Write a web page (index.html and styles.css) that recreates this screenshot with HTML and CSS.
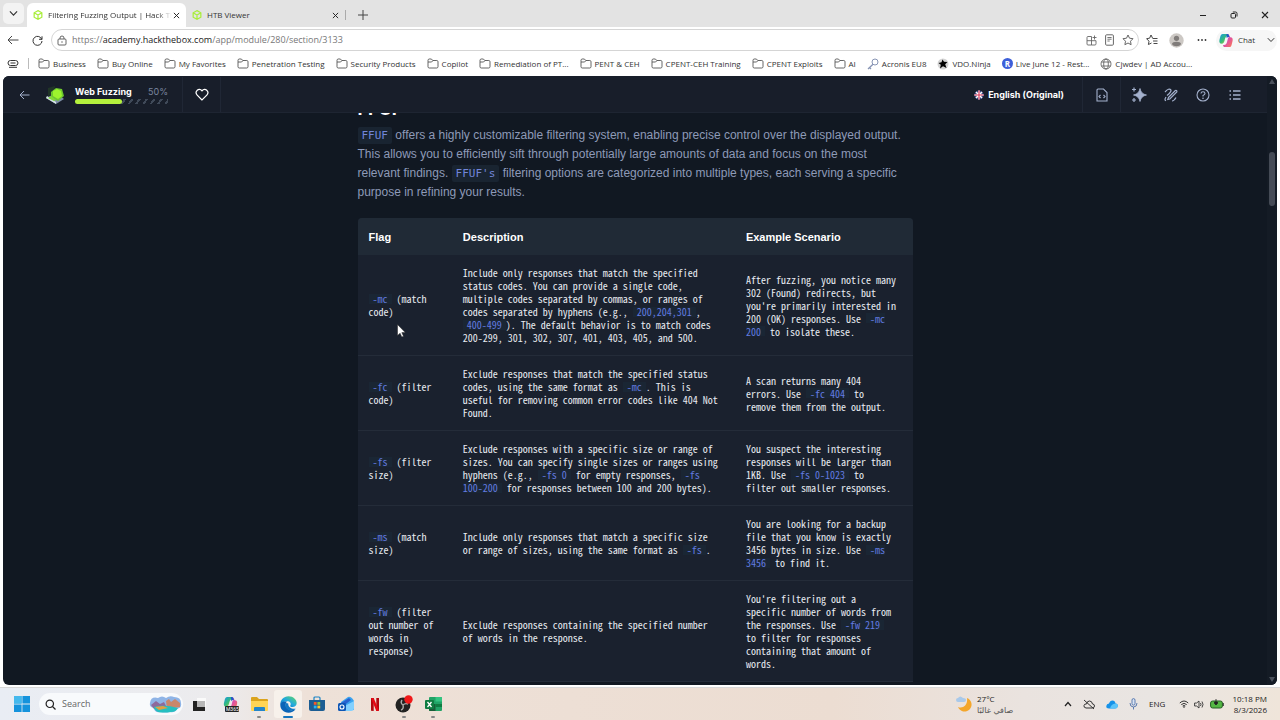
FILE: index.html
```html
<!DOCTYPE html>
<html lang="en">
<head>
<meta charset="utf-8">
<title>Filtering Fuzzing Output | Hack The Box Academy</title>
<link rel="stylesheet" href="styles.css">
</head>
<body>
<svg class="defs" aria-hidden="true">
  <defs>
    <symbol id="folder" viewBox="0 0 12 11"><path d="M1 3.2V2.3C1 1.6 1.5 1 2.2 1h2.2l1.4 1.5h4C10.500 2.500 11 3 11 3.700v5C11 9.500 10.500 10 9.800 10H2.200C1.500 10 1 9.500 1 8.800zM1 4h3.600L6 2.500" fill="none" stroke="#555" stroke-width=".9"/></symbol>
    <symbol id="close" viewBox="0 0 8 8"><path d="M1 1l6 6M7 1L1 7" stroke="#222" stroke-width="1.100"/></symbol>
    <symbol id="down" viewBox="0 0 8 6"><path d="M.8 1.200L4 4.500l3.200-3.300" fill="none" stroke="#333" stroke-width="1"/></symbol>
    <symbol id="cube" viewBox="0 0 12 12"><path d="M6 .8l4.600 2.500v5.400L6 11.200 1.400 8.700V3.300zM1.400 3.300L6 6l4.600-2.700M6 6v5" fill="none" stroke="#a9ee3c" stroke-width="1.500"/></symbol>
    <linearGradient id="copA" x1="0" y1="0" x2="1" y2="1"><stop offset="0" stop-color="#1797e8"/><stop offset=".5" stop-color="#35bd78"/><stop offset="1" stop-color="#f3c52f"/></linearGradient>
    <linearGradient id="copB" x1="0" y1="0" x2="1" y2="1"><stop offset="0" stop-color="#8a4bea"/><stop offset=".5" stop-color="#dc4fa6"/><stop offset="1" stop-color="#ff7c4c"/></linearGradient>
    <symbol id="copilot" viewBox="0 0 16 16"><path d="M4.500 1H9c1.500 0 2 1 2.300 2L9 3.500C7.500 4 7 6 6.500 8S5.200 11.500 3.500 11.500C1 11.500.6 9.500 1 7.500l1-4C2.400 2 3 1 4.500 1z" fill="url(#copA)"/><path d="M9.500 1c1.500 0 2 1 2.300 2.500l.7 1c2.400 0 3 1.500 2.500 4l-1 4c-.4 1.500-1 2.500-2.500 2.500H7c-1.500 0-2-1-2.300-2L7 12.500c1.500-.5 2-2.500 2.500-4.500s.5-3 1.500-3.600C10.500 3 10.300 1.500 9.500 1z" fill="url(#copB)"/><path d="M8.500 1h1c1.200.3 1.800 1.500 2.200 3.400-1.500-.2-2.400.2-3 1.100z" fill="#2458c9"/></symbol>
  </defs>
</svg>

<div class="tabs">
  <button class="tab-menu" aria-label="Tab actions"><svg width="9" height="7"><use href="#down"/></svg></button>
  <div class="tab active"><svg width="10" height="10"><use href="#cube"/></svg><span class="tab-title">Filtering Fuzzing Output | Hack Th</span><button aria-label="Close tab"><svg width="7" height="7"><use href="#close"/></svg></button></div>
  <div class="tab"><svg width="10" height="10"><use href="#cube"/></svg><span class="tab-title">HTB Viewer</span><button aria-label="Close tab"><svg width="7" height="7"><use href="#close"/></svg></button></div>
  <button class="new-tab" aria-label="New tab"><svg width="10" height="10" viewBox="0 0 10 10"><path d="M5 0v10M0 5h10" stroke="#444"/></svg></button>
  <div class="window-buttons">
    <button aria-label="Minimize"><svg width="8" height="8" viewBox="0 0 8 8"><path d="M1 4.500h6" stroke="#222"/></svg></button>
    <button aria-label="Restore"><svg width="8" height="8" viewBox="0 0 8 8"><rect x="1" y="2.500" width="4.500" height="4.500" rx="1" fill="none" stroke="#222"/><path d="M2.800 1h2.700Q7 1 7 2.500v3" fill="none" stroke="#222"/></svg></button>
    <button aria-label="Close"><svg width="8" height="8"><use href="#close"/></svg></button>
  </div>
</div>

<div class="toolbar">
  <button class="nav" aria-label="Back"><svg width="12" height="10" viewBox="0 0 12 10"><path d="M11.500 5H1M5 1L1 5l4 4" fill="none" stroke="#444"/></svg></button>
  <button class="nav" aria-label="Refresh"><svg width="11" height="11" viewBox="0 0 11 11"><path d="M9.800 4.500A4.500 4.500 0 1 0 10 6M10 1.300v3H7" fill="none" stroke="#333"/></svg></button>
  <div class="address">
    <svg width="10" height="11" viewBox="0 0 10 11"><rect x="1" y="4" width="8" height="6" rx="1" fill="none" stroke="#555" stroke-width=".9"/><path d="M3 4V3a2 2 0 0 1 4 0v1" fill="none" stroke="#555" stroke-width=".9"/><circle cx="5" cy="7" r=".7" fill="#555"/></svg>
    <div class="url" role="textbox" aria-label="Address" tabindex="0">https://<b>academy.hackthebox.com</b>/app/module/280/section/3133</div>
    <button aria-label="Apps"><svg width="11" height="11" viewBox="0 0 11 11"><path d="M1 2.500Q1 1.500 2 1.500h3.500v8.500H2Q1 10 1 9zM1 5.700h9v3Q10 10 9 10H5.500M8.500.5v4M6.500 2.500h4" fill="none" stroke="#666" stroke-width=".9"/></svg></button>
    <button aria-label="Reader"><svg width="9" height="12" viewBox="0 0 9 12"><rect x=".6" y=".8" width="7.800" height="10.400" rx="1" fill="none" stroke="#666"/><path d="M2.400 3.500h4.200M2.400 5.200h4.200M2.400 7h2.300" stroke="#666" stroke-width=".9"/></svg></button>
    <button aria-label="Add to favorites"><svg width="12" height="12" viewBox="0 0 12 12"><path d="M6 1l1.500 3.200 3.500.5-2.500 2.500.6 3.500L6 9l-3.100 1.700.6-3.500L1 4.700l3.500-.5z" fill="none" stroke="#555" stroke-width=".9"/></svg></button>
  </div>
  <button class="tool" aria-label="Favorites"><svg width="12" height="12" viewBox="0 0 12 12"><path d="M6.500 4L5 1 3.600 4.200l-3 .5L3 7.200l-.6 3.300L5.500 9M6.500 4.500h5M7 7h4.500M7.500 9.500h4" fill="none" stroke="#333" stroke-width=".9"/></svg></button>
  <button class="tool" aria-label="Profile"><svg width="15" height="15" viewBox="0 0 15 15"><circle cx="7.500" cy="7.500" r="7.200" fill="#ccc8c4"/><circle cx="7.500" cy="5.300" r="2.600" fill="#807c7a"/><path d="M3 11c0-3 9-3 9 0-1.300 3-7.700 3-9 0z" fill="#807c7a"/></svg></button>
  <button class="tool" aria-label="More"><svg width="10" height="4" viewBox="0 0 10 4"><g fill="#333"><circle cx="1.500" cy="2" r=".9"/><circle cx="5" cy="2" r=".9"/><circle cx="8.500" cy="2" r=".9"/></g></svg></button>
  <button class="chat"><svg width="16" height="15"><use href="#copilot"/></svg><span>Chat</span><svg width="8" height="6"><use href="#down"/></svg></button>
</div>

<nav class="bookmarks" aria-label="Favorites bar">
  <button aria-label="Workspace"><svg width="12" height="10" viewBox="0 0 12 10"><rect x="1" y="1.500" width="10" height="5" rx="2.500" fill="none" stroke="#333"/><path d="M3.500 4h5M2 8.300h8" stroke="#333"/></svg></button>
  <i class="bar"></i>
  <a href="#"><svg width="12" height="11"><use href="#folder"/></svg>Business</a>
  <a href="#"><svg width="12" height="11"><use href="#folder"/></svg>Buy Online</a>
  <a href="#"><svg width="12" height="11"><use href="#folder"/></svg>My Favorites</a>
  <a href="#"><svg width="12" height="11"><use href="#folder"/></svg>Penetration Testing</a>
  <a href="#"><svg width="12" height="11"><use href="#folder"/></svg>Security Products</a>
  <a href="#"><svg width="12" height="11"><use href="#folder"/></svg>Copilot</a>
  <a href="#"><svg width="12" height="11"><use href="#folder"/></svg>Remediation of PT...</a>
  <a href="#"><svg width="12" height="11"><use href="#folder"/></svg>PENT &amp; CEH</a>
  <a href="#"><svg width="12" height="11"><use href="#folder"/></svg>CPENT-CEH Training</a>
  <a href="#"><svg width="12" height="11"><use href="#folder"/></svg>CPENT Exploits</a>
  <a href="#"><svg width="12" height="11"><use href="#folder"/></svg>AI</a>
  <a href="#"><svg width="12" height="12" viewBox="0 0 12 12"><circle cx="8" cy="4" r="3" fill="#fff" stroke="#8794b4"/><path d="M6 6.200L1 11M2.500 9.500L4 11" stroke="#8794b4" stroke-width="1.300"/></svg>Acronis EU8</a>
  <a href="#"><svg width="12" height="12" viewBox="0 0 12 12"><circle cx="6" cy="6" r="5.500" fill="#d4d4d4"/><path d="M5.500 1.500l1.500 2.300 3.500.2-2.300 2.300L9.500 10 6 8.300 3 10.500l.8-3.800L1.500 5l3-.7z" fill="#000"/></svg>VDO.Ninja</a>
  <a href="#"><span class="r-badge">R</span>Live June 12 - Rest...</a>
  <a href="#"><svg width="12" height="12" viewBox="0 0 12 12"><g fill="none" stroke="#555" stroke-width=".8"><circle cx="6" cy="6" r="5"/><ellipse cx="6" cy="6" rx="2.300" ry="5"/><path d="M1.500 4h9M1.500 8h9"/></g></svg>Cjwdev | AD Accou...</a>
</nav>

<div class="page">
  <div class="view">
    <header class="module-bar">
      <button class="back" aria-label="Back"><svg width="11" height="10" viewBox="0 0 11 10"><path d="M10.500 5H1M5 1L1 5l4 4" fill="none" stroke="#a4b1cd"/></svg></button>
      <svg class="logo" width="20" height="20" viewBox="0 0 20 20"><path d="M1 13l10 6 8-5-8-6z" fill="#7e8fa6"/><path d="M1 13l10 6v-2L2 11z" fill="#d5e3e4"/><path d="M3 3l7-2-1 8-6 2z" fill="#203527"/><path d="M6 7l5-4 6 1 2 7-6 5-7-4z" fill="#6ec92e"/><path d="M8 6l4-2 4 2 1 5-4 3-5-3z" fill="#9df42d"/><path d="M3 13l3-2 5 4-2 1z" fill="#82da36"/></svg>
      <div class="progress">
        <div class="progress-head"><strong>Web Fuzzing</strong><span>50%</span></div>
        <div class="track"><div class="fill" style="width:50%"></div></div>
      </div>
      <button class="heart" aria-label="Like"><svg width="14" height="13" viewBox="0 0 14 13"><path d="M7 12L2.200 7.200C-1 3.500 4-1 7 2.800 10-1 15 3.500 11.800 7.200z" fill="none" stroke="#fff" stroke-width="1.200"/></svg></button>
      <button class="language"><svg width="10" height="10" viewBox="0 0 10 10"><circle cx="5" cy="5" r="4.600" fill="#33457f"/><path d="M2 2l6 6M8 2L2 8M5 .4v9.200M.4 5h9.200" stroke="#fff" stroke-width="1.600"/><path d="M5 .4v9.200M.4 5h9.200" stroke="#dc3555" stroke-width="1.100"/></svg>English (Original)</button>
      <button class="notes" aria-label="Code"><svg width="12" height="14" viewBox="0 0 12 14"><path d="M2 1h5.500L11 4.500V13H1V2q0-1 1-1zM4.500 7L3 8.500 4.500 10M7.500 7L9 8.500 7.500 10" fill="none" stroke="#a4b1cd" stroke-width="1.100"/></svg></button>
      <div class="actions">
        <button aria-label="Assistant"><svg width="16" height="16" viewBox="0 0 16 16"><path d="M9 1.500Q10 7 15.500 8 10 9 9 14.500 8 9 2.500 8 8 7 9 1.500z" fill="#a4b1cd" stroke="#a4b1cd" stroke-width=".8" stroke-linejoin="round"/><path d="M3 .5v4M1 2.500h4M3 11v4M1 13h4" stroke="#a4b1cd" stroke-width="1.200"/></svg></button>
        <button aria-label="Draw"><svg width="14" height="14" viewBox="0 0 14 14"><path d="M1 4Q5-.5 7 2.200 7.500 4 3 7.500M4.500 9.500l6.800-7q2-.5 1.500 1.500l-7 7-2 .5zM8 13q2 0 4-3.500M2 9q-2 3 0 3.700" fill="none" stroke="#a4b1cd" stroke-width="1.200"/></svg></button>
        <button aria-label="Help"><svg width="14" height="14" viewBox="0 0 14 14"><circle cx="7" cy="7" r="6" fill="none" stroke="#a4b1cd" stroke-width="1.100"/><path d="M5 5.500Q5 3.700 7 3.700T9 5.500Q9 6.500 7 7.500v1" fill="none" stroke="#a4b1cd" stroke-width="1.100"/><circle cx="7" cy="10.300" r=".8" fill="#a4b1cd"/></svg></button>
        <button aria-label="Contents"><svg width="12" height="12" viewBox="0 0 12 12"><path d="M.5 2h1.500M.5 6H2M.5 10H2M4 2h7.500M4 6h7.500M4 10h7.500" stroke="#a4b1cd" stroke-width="1.300"/></svg></button>
      </div>
    </header>
    <main class="scroll">
      <article>
        <h2>FFUF</h2>
        <p><code>FFUF</code> offers a highly customizable filtering system, enabling precise control over the displayed output.<br>This allows you to efficiently sift through potentially large amounts of data and focus on the most<br>relevant findings. <code>FFUF's</code> filtering options are categorized into multiple types, each serving a specific<br>purpose in refining your results.</p>
        <table>
          <thead><tr><th class="flag">Flag</th><th class="desc">Description</th><th>Example Scenario</th></tr></thead>
          <tbody>
            <tr>
              <td><code>-mc</code> (match<br>code)</td>
              <td>Include only responses that match the specified<br>status codes. You can provide a single code,<br>multiple codes separated by commas, or ranges of<br>codes separated by hyphens (e.g., <code>200,204,301</code>,<br><code>400-499</code>). The default behavior is to match codes<br>200-299, 301, 302, 307, 401, 403, 405, and 500.</td>
              <td>After fuzzing, you notice many<br>302 (Found) redirects, but<br>you're primarily interested in<br>200 (OK) responses. Use <code>-mc<br>200</code> to isolate these.</td>
            </tr>
            <tr>
              <td><code>-fc</code> (filter<br>code)</td>
              <td>Exclude responses that match the specified status<br>codes, using the same format as <code>-mc</code>. This is<br>useful for removing common error codes like 404 Not<br>Found.</td>
              <td>A scan returns many 404<br>errors. Use <code>-fc 404</code> to<br>remove them from the output.</td>
            </tr>
            <tr>
              <td><code>-fs</code> (filter<br>size)</td>
              <td>Exclude responses with a specific size or range of<br>sizes. You can specify single sizes or ranges using<br>hyphens (e.g., <code>-fs 0</code> for empty responses, <code>-fs<br>100-200</code> for responses between 100 and 200 bytes).</td>
              <td>You suspect the interesting<br>responses will be larger than<br>1KB. Use <code>-fs 0-1023</code> to<br>filter out smaller responses.</td>
            </tr>
            <tr>
              <td><code>-ms</code> (match<br>size)</td>
              <td>Include only responses that match a specific size<br>or range of sizes, using the same format as <code>-fs</code>.</td>
              <td>You are looking for a backup<br>file that you know is exactly<br>3456 bytes in size. Use <code>-ms<br>3456</code> to find it.</td>
            </tr>
            <tr>
              <td><code>-fw</code> (filter<br>out number of<br>words in<br>response)</td>
              <td>Exclude responses containing the specified number<br>of words in the response.</td>
              <td>You're filtering out a<br>specific number of words from<br>the responses. Use <code>-fw 219</code><br>to filter for responses<br>containing that amount of<br>words.</td>
            </tr>
          </tbody>
        </table>
      </article>
    </main>
  </div>
  <div class="scrollbar"><svg width="6" height="5" viewBox="0 0 6 5"><path d="M3 0l3 5H0z" fill="#4a515c"/></svg><div class="thumb"></div><svg width="6" height="5" viewBox="0 0 6 5"><path d="M3 5l3-5H0z" fill="#4a515c"/></svg></div>
  <svg class="cursor" width="9" height="14" viewBox="0 0 9 14"><path d="M.5.500v11l2.600-2.300L4.800 13l1.700-.8L4.800 8.600h3.500z" fill="#fff" stroke="#222" stroke-width=".5"/></svg>
</div>

<footer class="taskbar">
  <button class="start" aria-label="Start"><svg width="16" height="16" viewBox="0 0 16 16"><path d="M0 0h7.600v7.600H0zM8.400 0H16v7.600H8.400zM0 8.400h7.600V16H0zM8.400 8.400H16V16H8.400z" fill="#1593dc"/><path d="M0 0h7.600v7.600H0z" fill="#45b9ed"/></svg></button>
  <label class="search"><svg width="11" height="11" viewBox="0 0 11 11"><circle cx="4.800" cy="4.800" r="3.700" fill="none" stroke="#222" stroke-width="1.200"/><path d="M7.500 7.500l3 3" stroke="#222" stroke-width="1.300"/></svg><input type="text" placeholder="Search" aria-label="Search">
    <svg width="33" height="17" viewBox="0 0 33 17"><path d="M1 7Q2 0 9 2q4-3 8 0 4-3 8-1 7 0 7 6 1 5-4 6-2 4-7 3-6 1-9 0-7 1-7-4Q0 11 1 7z" fill="#8fb4e6"/><path d="M2 9l5-4 4 3 4-2 2 4v3H5z" fill="#8e6a9c"/><path d="M17 5l3-2 2 3 4-3 5 4v4l-13 2z" fill="#c9876b"/><path d="M5 11q10-3 24 1-2 4-7 4-8 1-13 0-4-2-4-5z" fill="#25bfc0"/><path d="M6 11l8-1 5 2-9 2z" fill="#e0a044"/></svg></label>
  <button class="task-view" aria-label="Task view"><svg width="15" height="15" viewBox="0 0 15 15"><path d="M5 1h9v9H5z" fill="#fafafa"/><path d="M1 4h4v6h8v4H1z" fill="#222"/><path d="M5 4h8v6H5z" fill="#b7b7b7"/></svg></button>
  <div class="apps">
    <button aria-label="Microsoft 365"><svg width="17" height="16" viewBox="0 0 17 16"><use href="#copilot" width="17" height="15"/><rect x="3" y="10" width="14" height="6" rx="1" fill="#222"/><text x="4" y="15" font-size="5" fill="#fff" font-family="Roboto">M365</text></svg></button>
    <button class="open" aria-label="File Explorer"><svg width="17" height="16" viewBox="0 0 17 16"><path d="M0 2q0-1 1-1h5l2 2h8q1 0 1 1v10H0z" fill="#dba31c"/><path d="M0 5h17v9q0 1-1 1H1q-1 0-1-1z" fill="#ffd455"/><path d="M4 11h9q1 0 1 1v3H3v-3q0-1 1-1z" fill="#2385ca"/></svg></button>
    <button class="open current" aria-label="Microsoft Edge"><svg width="17" height="17" viewBox="0 0 17 17"><defs><linearGradient id="edge" x1="0" y1="1" x2="1" y2="0"><stop offset="0" stop-color="#0961b8"/><stop offset=".5" stop-color="#22a9df"/><stop offset="1" stop-color="#62da61"/></linearGradient></defs><path d="M8.500.3c5 0 8.200 3.400 8.200 6.800 0 2.600-2 3.900-4.200 3.900-2 0-2.700-.7-2.200-1.500C11.700 7 9.600 5 7 5.200 3 5.500 1.800 8 .3 9 .2 4 3.500.3 8.500.3z" fill="url(#edge)"/><path d="M.3 9C1 6 4 5 7 5.700 4.500 7.500 5.500 13 10 14c2 .5 4 0 5.500-1-1.500 2.500-4 3.700-7 3.700C3.500 16.700.3 13 .3 9z" fill="#0b64b7"/><path d="M5.800 7c-1.500 3 .3 6.200 3.400 7.200 2.200.7 4.600.1 6.500-1.500-4 .8-8-2-7.400-5.200z" fill="#1277c4"/></svg></button>
    <button aria-label="Store"><svg width="16" height="16" viewBox="0 0 16 16"><path d="M5 4V2q0-1 1-1h4q1 0 1 1v2" fill="none" stroke="#1b84c6" stroke-width="1.200"/><path d="M0 4h16v9q0 2-2 2H2q-2 0-2-2z" fill="#1c5d93"/><path d="M4.800 6h2.800v2.800H4.800z" fill="#f45a2a"/><path d="M8.400 6h2.800v2.800H8.400z" fill="#8cc63f"/><path d="M4.800 9.600h2.800v2.800H4.800z" fill="#29b6ef"/><path d="M8.400 9.600h2.800v2.800H8.400z" fill="#ffc62d"/></svg></button>
    <button aria-label="Outlook"><svg width="17" height="16" viewBox="0 0 17 16"><path d="M3 6l7-5q3-1 6 4v9H4z" fill="#3ba4ef"/><path d="M3 7l8-5 2 2-9 7z" fill="#2862d0"/><path d="M5 11l11-6v7q0 3-3 3H6z" fill="#82d0ff"/><rect y="7" width="8" height="8" rx="1.500" fill="#0d55b5"/><circle cx="4" cy="11" r="2" fill="none" stroke="#fff" stroke-width="1.100"/></svg></button>
    <button aria-label="Netflix"><svg width="8" height="13" viewBox="0 0 8 13"><path d="M0 0h2.700v13L0 12.700zM5.300 0H8v12.700L5.300 13z" fill="#b20710"/><path d="M0 0h2.700L8 12.700 5.300 13z" fill="#e50914"/></svg></button>
    <button class="open" aria-label="OBS Studio"><svg width="18" height="18" viewBox="0 0 18 18"><circle cx="8" cy="10" r="7.500" fill="#222"/><g fill="none" stroke="#aaa" stroke-width="1.400"><path d="M7 5q-2 3 1 5M13 9q-3-1-5 1M6 15q3-1 2-5"/></g><circle cx="13.500" cy="4.500" r="4.200" fill="#f01819"/></svg></button>
    <button class="open" aria-label="Excel"><svg width="17" height="16" viewBox="0 0 17 16"><rect x="4" y="1" width="13" height="14" rx="1" fill="#21a366"/><path d="M10.500 1H16q1 0 1 1v3.500h-6.500z" fill="#33c481"/><path d="M4 8h6.500v7H5q-1 0-1-1z" fill="#185c37"/><path d="M10.500 8H17v3h-6.500z" fill="#107c41"/><rect y="4" width="9" height="9" rx="1" fill="#107c41"/><path d="M2.500 6l4 5M6.500 6l-4 5" stroke="#fff" stroke-width="1.300"/></svg></button>
  </div>
  <div class="weather"><svg width="16" height="16" viewBox="0 0 16 16"><path d="M11 2a7 7 0 1 1-9 9c5 2 10-2 9-9z" fill="#f4a62a"/><path d="M2 6q-2 0-2-2t2-2q2-3 5 0 3 0 3 2t-2 2z" fill="#a9c9ea"/></svg><div>27°C<br><span lang="ar" dir="rtl">صافي غالبًا</span></div></div>
  <div class="tray">
    <svg width="8" height="6" viewBox="0 0 8 6"><path d="M1 5l3-3.500L7 5" fill="none" stroke="#222" stroke-width="1.200"/></svg>
    <svg width="12" height="11" viewBox="0 0 12 11"><path d="M3 9Q.5 8.500 1 6.500T3.500 5Q4 2 6.500 2T9.500 5q2 0 2 2T9 9zM1 1l10 9" fill="none" stroke="#333"/></svg>
    <svg width="12" height="9" viewBox="0 0 12 9"><path d="M3 8.500Q0 8.500.3 6T3 3.500Q4 .5 6.500.5t3 3q2.500 0 2.300 2.500T9 8.500z" fill="#1692e8"/><path d="M4 8.500Q5 4 9.500 3.500q2.500 0 2.300 2.500T9 8.500z" fill="#5bc4fa"/></svg>
    <svg width="9" height="12" viewBox="0 0 9 12"><rect x="3" y=".6" width="3" height="6.500" rx="1.500" fill="#d8e3f2" stroke="#4e71ac" stroke-width=".9"/><path d="M1 5q0 4 3.500 4T8 5M4.500 9v2.500" fill="none" stroke="#4e71ac" stroke-width=".9"/></svg>
    <span>ENG</span>
  </div>
  <div class="status">
    <svg width="10" height="8" viewBox="0 0 10 8"><path d="M.8 3q4.200-4 8.400 0M2.300 4.600q2.700-2.500 5.400 0M3.700 6q1.300-1 2.600 0" fill="none" stroke="#222" stroke-width=".9"/><circle cx="5" cy="7" r=".8" fill="#222"/></svg>
    <svg width="11" height="9" viewBox="0 0 11 9"><path d="M.6 3h2l2.400-2v7L2.600 6h-2zM6.500 3q1 1.500 0 3M8 1.500q2 3 0 6" fill="none" stroke="#333" stroke-width=".9"/></svg>
    <svg width="14" height="10" viewBox="0 0 14 10"><rect x=".6" y="2" width="11.800" height="7" rx="2" fill="#54b744" stroke="#245f22"/><path d="M13.300 4v3" stroke="#333"/><path d="M6 0v3M4.500 3h3v1.500L6 6 4.500 4.500z" fill="#222" stroke="#222" stroke-width=".8"/></svg>
  </div>
  <div class="clock">10:18 PM<br>8/3/2026</div>
</footer>
</body>
</html>
```
FILE: styles.css
```css
* { box-sizing: border-box; }
body {
  margin: 0;
  height: 100vh;
  display: flex;
  flex-direction: column;
  overflow: hidden;
  background: #fff;
  color: #333;
  font: 8px/12px "Open Sans", "Noto Sans", sans-serif;
}
button {
  padding: 0;
  border: 0;
  background: none;
  color: inherit;
  font: inherit;
  display: flex;
  align-items: center;
  justify-content: center;
}
svg { display: block; flex: none; }
.defs { position: absolute; width: 0; height: 0; }

.tabs { display: flex; align-items: center; height: 27px; flex: none; background: #e3e3e3; padding: 3px 0 0 3px; }
.tab-menu { width: 21px; height: 21px; margin: 0 3px 3px 0; border-radius: 5px; background: #f3f3f3; }
.tab { display: flex; align-items: center; width: 159px; height: 24px; padding: 0 5px 0 6px; }
.tab-title { flex: 1; min-width: 0; margin-left: 5px; overflow: hidden; white-space: nowrap; }
.tab.active { background: #fff; border-radius: 6px 6px 0 0; }
.tab.active .tab-title { mask-image: linear-gradient(to right, #000 88%, transparent); }
.tab button { width: 9px; height: 9px; }
.new-tab { width: 27px; border-left: 1px solid #aaa; padding-left: 8px; }
.window-buttons { margin-left: auto; display: flex; }
.window-buttons button { width: 31px; }

.toolbar { display: flex; align-items: center; height: 26px; flex: none; padding: 0 3px 0 1px; }
.nav { width: 24px; }
.address { flex: 1; display: flex; align-items: center; gap: 8px; height: 22px; margin-left: 2px; padding: 0 4px 0 5px; border: 1px solid #d5d5d5; border-radius: 11px; }
.url { flex: 1; font-size: 9px; margin-left: -3px; color: #777; }
.url b { font-weight: 400; color: #222; }
.tool { width: 25px; }
.chat { width: 61px; height: 21px; margin-left: 2px; border-radius: 11px; background: #f6f6f6; gap: 4px; }
.chat span { flex: none; margin-right: 8px; }

.bookmarks { display: flex; align-items: center; gap: 11px; height: 23px; flex: none; padding: 0 0 2px 7px; white-space: nowrap; }
.bookmarks a { display: flex; align-items: center; gap: 3px; color: #333; text-decoration: none; }
.bar { width: 1px; height: 11px; background: #bbb; margin: 0 -2px; }
.r-badge { width: 11px; height: 11px; border-radius: 50%; background: #3d5fd9; color: #fff; text-align: center; line-height: 11px; font-weight: 700; }

.page { position: relative; flex: 1; min-height: 0; display: flex; margin: 0 3px 2px; border-radius: 6px; overflow: hidden; background: #111822; }
.view { flex: 1; min-width: 0; display: flex; flex-direction: column; }
.module-bar { display: flex; align-items: center; height: 37px; flex: none; padding-top: 1px; background: #181e2a; border-bottom: 1px solid #1e2532; color: #fff; font: 10px/12px Inter, "Liberation Sans", sans-serif; }
.module-bar > button { height: 100%; }
.back { width: 42px; }
.logo { margin-right: 10px; }
.progress { width: 93px; }
.progress-head { display: flex; justify-content: space-between; font-size: 9px; }
.progress-head span { color: #78859f; }
.track { height: 5px; margin-top: 1px; background: repeating-linear-gradient(125deg, transparent 0 4px, #3f4958 4px 6px); }
.fill { height: 5px; border-radius: 3px; background: #b5f13d; }
.heart { width: 39px; margin-left: 14px; border-left: 1px solid #202735; border-right: 1px solid #202735; }
.language { margin-left: auto; gap: 4px; padding-right: 18px; font-size: 9px; font-weight: 700; }
.notes { width: 39px; border-left: 1px solid #202735; border-right: 1px solid #202735; }
.actions { display: flex; width: 146px; padding-left: 2px; }
.actions button { width: 32px; }

.scroll { flex: 1; min-height: 0; overflow: hidden; }
article { width: 555px; max-width: 100%; margin: -16px auto 0; }
h2 { margin: 0 0 5px; color: #fff; font: 700 18px/24px Inter, "Liberation Sans", sans-serif; }
p { margin: 0 0 16px; color: #8e9ab8; font: 12px/19px "Liberation Sans", sans-serif; white-space: nowrap; }
p code { padding: 2px 4px; background: #192431; color: #7286d9; font: 11px/13px "DejaVu Sans Mono", monospace; border-radius: 2px; }
table { width: 100%; table-layout: fixed; border-collapse: separate; border-spacing: 0; border-radius: 4px 4px 0 0; background: #1a212e; overflow: hidden; }
th { height: 37px; padding: 0 0 0 11px; text-align: left; background: #202a36; color: #fff; font: 700 11px/14px "Liberation Sans", sans-serif; }
.flag { width: 17%; }
.desc { width: 51%; }
td { padding: 11px 0 11px 11px; border-bottom: 1px solid #242c39; color: #e8ebf1; font: 10px/13px "Noto Sans Mono CJK SC", "DejaVu Sans Mono", monospace; white-space: nowrap; vertical-align: middle; }
td code { padding: 0 4px; background: linear-gradient(#1a2634, #1a2634) center / 100% 10px no-repeat; color: #637be0; font: inherit; }

.scrollbar { width: 10px; display: flex; flex-direction: column; align-items: center; justify-content: space-between; padding: 3px 0; background: #141b25; }
.thumb { width: 6px; height: 54px; border-radius: 3px; background: #454b56; margin: 68px 0 auto; }
.cursor { position: absolute; left: 394px; top: 248px; }

.taskbar { display: flex; align-items: center; height: 33px; flex: none; border-top: 1px solid #d8d8d8; background: linear-gradient(to right, #e9edf4 0, #ecebed 17%, #eee1d8 24%, #ecddd2 65%, #eae3df 80%, #e9e5e2 90%, #efe5da); color: #222; }
.start { width: 44px; }
.start + .search { margin-left: -5px; }
.search { display: flex; align-items: center; width: 144px; height: 22px; padding: 0 1px 0 6px; border-radius: 11px; background: #f8fafc; gap: 6px; }
.search input { flex: 1; min-width: 0; padding: 0; border: 0; background: none; font: 9px/12px "Open Sans", "Noto Sans", sans-serif; }
.search input::placeholder { color: #666; }
.task-view { width: 33px; }
.apps { display: flex; gap: 1px; }
.apps button { position: relative; width: 28px; height: 28px; }
.apps .current { border-radius: 3px; background: #f7f1eb; }
.apps .open::after { content: ""; position: absolute; bottom: 0; width: 4px; height: 2px; border-radius: 1px; background: #888; }
.apps .current::after { width: 10px; background: #1674bd; }
.weather { display: flex; align-items: center; gap: 5px; margin-left: auto; line-height: 11px; width: 108px; }
.weather span { font-family: "DejaVu Sans", sans-serif; color: #555; }
.tray { display: flex; align-items: center; gap: 11px; width: 115px; }
.status { display: flex; align-items: center; gap: 5px; width: 45px; }
.clock { width: 56px; padding-right: 13px; text-align: right; line-height: 11px; white-space: nowrap; }
```
